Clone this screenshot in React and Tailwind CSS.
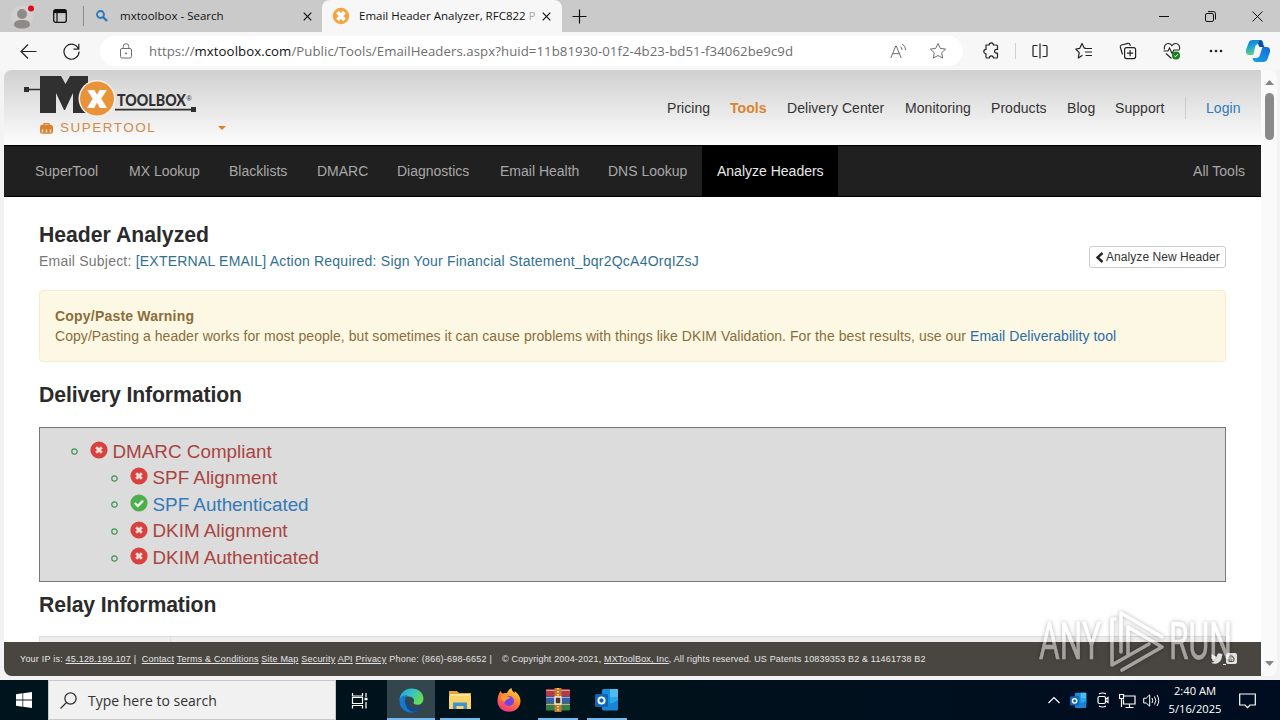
import React from 'react';
import clsx from 'clsx';

const topLinks = [
  { label: 'Pricing', width: 'w-[43px]' },
  { label: 'Tools', width: 'w-[37px]', active: true },
  { label: 'Delivery Center', width: 'w-[98px]' },
  { label: 'Monitoring', width: 'w-[66px]' },
  { label: 'Products', width: 'w-[56px]' },
  { label: 'Blog', width: 'w-[28px]' },
  { label: 'Support', width: 'w-[50px]' },
];

const toolTabs = [
  { label: 'SuperTool', width: 'w-[94px]' },
  { label: 'MX Lookup', width: 'w-[100px]' },
  { label: 'Blacklists', width: 'w-[88px]' },
  { label: 'DMARC', width: 'w-[80px]' },
  { label: 'Diagnostics', width: 'w-[103px]' },
  { label: 'Email Health', width: 'w-[108px]' },
  { label: 'DNS Lookup', width: 'w-[109px]' },
  { label: 'Analyze Headers', width: 'w-[136px]', active: true },
];

const checks = [
  { label: 'DMARC Compliant', ok: false, nested: false },
  { label: 'SPF Alignment', ok: false, nested: true },
  { label: 'SPF Authenticated', ok: true, nested: true },
  { label: 'DKIM Alignment', ok: false, nested: true },
  { label: 'DKIM Authenticated', ok: false, nested: true },
];

const Icon = ({ size = 16, box = 16, className, children }) => (
  <svg
    width={size}
    height={size}
    viewBox={`0 0 ${box} ${box}`}
    fill="none"
    stroke="currentColor"
    className={clsx('shrink-0', className)}
  >
    {children}
  </svg>
);

const CloseIcon = ({ size = 9 }) => (
  <Icon size={size} box={9}>
    <path d="M.7.7l7.6 7.6M8.3.7L.7 8.3" strokeWidth="1.2" />
  </Icon>
);

const TabStrip = () => (
  <div className="flex h-8 items-center bg-[#cacaca] text-[#111] font-['Open_Sans','Noto_Sans',sans-serif] text-[11.5px]">
    <svg width="24" height="24" viewBox="0 0 24 24" className="ml-[11px] mt-0.5 shrink-0">
      <circle cx="11" cy="11.5" r="11" fill="#d3d1cf" />
      <circle cx="11" cy="9" r="4.9" fill="#8d8a88" />
      <path d="M3 19.500c0-3.200 3.200-4.500 8-4.500s8 1.300 8 4.500c0 2.500-3.500 4-8 4s-8-1.500-8-4z" fill="#8d8a88" />
      <circle cx="20" cy="3.500" r="3" fill="#e00b1c" />
    </svg>
    <Icon size={14} box={14} className="ml-[18px]">
      <rect x=".7" y=".7" width="12.600" height="12.600" rx="2" strokeWidth="1.300" />
      <path d="M1 2.500h12" strokeWidth="3.200" />
      <path d="M4 4v9" strokeWidth="1.200" />
    </Icon>
    <div className="ml-[16px] h-5 w-px bg-[#8c8c8c]" />
    <svg width="12" height="12" viewBox="0 0 12 12" className="ml-[12px] shrink-0 text-[#2a76bd]">
      <circle cx="4.500" cy="4.500" r="3.500" fill="none" stroke="currentColor" strokeWidth="1.800" />
      <path d="M7 7l4 4" stroke="currentColor" strokeWidth="2.300" />
    </svg>
    <div className="ml-[12px] w-[183px] whitespace-nowrap">mxtoolbox - Search</div>
    <CloseIcon />
    <div className="ml-[10px] flex h-8 w-[240px] items-center rounded-t-lg bg-[#f7f7f7]">
      <svg width="18" height="18" viewBox="0 0 18 18" className="ml-[10px] shrink-0">
        <circle cx="9" cy="9" r="8.200" fill="#f6a33a" />
        <path d="M5.500 5l7 8M12.500 5l-7 8" stroke="#fff" strokeWidth="3.600" />
      </svg>
      <div className="ml-[9px] w-[178px] whitespace-nowrap">
        Email Header Analyzer, RFC822 <span className="text-[#aaa]">P</span>
      </div>
      <div className="ml-[5px] flex">
        <CloseIcon />
      </div>
    </div>
    <Icon size={15} box={15} className="ml-[10px]">
      <path d="M7.500 .5v14M.5 7.500h14" strokeWidth="1.200" />
    </Icon>
    <div className="ml-auto mr-[17px] flex items-center gap-[36px]">
      <Icon size={10} box={10}>
        <path d="M0 5.500h10" />
      </Icon>
      <Icon size={11} box={11}>
        <rect x=".5" y="2.500" width="8" height="8" rx="1.500" />
        <path d="M3 .6h5.500a2 2 0 0 1 2 2V8.500" />
      </Icon>
      <Icon size={11} box={11}>
        <path d="M.5.500l10 10M10.500.500l-10 10" />
      </Icon>
    </div>
  </div>
);

const AddressBar = () => (
  <div className="flex h-[38px] items-center bg-[#f7f7f7] text-[#222]">
    <Icon size={17} box={17} className="ml-[20px]">
      <path d="M16.500 8.500H1M8 1.500l-7 7 7 7" strokeWidth="1.200" />
    </Icon>
    <Icon size={17} box={17} className="ml-[26px]">
      <path d="M15.500 6A7.500 7.500 0 1 0 16 8.500M15.800 .8v5.400h-5.400" strokeWidth="1.200" />
    </Icon>
    <div className="ml-[20px] flex h-[30px] w-[863px] items-center rounded-full bg-white text-[#6e6e6e]">
      <Icon size={16} box={16} className="ml-[18px]">
        <rect x="2.500" y="5.500" width="11" height="9.500" rx="1.500" />
        <path d="M5.200 5.500V3.500a2.800 2.800 0 0 1 5.600 0v2" />
        <circle cx="8" cy="10.300" r=".6" fill="currentColor" />
      </Icon>
      <div className="ml-[15px] mt-px whitespace-nowrap font-['Open_Sans','Noto_Sans',sans-serif] text-[13.2px] tracking-[0.075px]">
        https://<span className="text-[#111]">mxtoolbox.com</span>
        /Public/Tools/EmailHeaders.aspx?huid=11b81930-01f2-4b23-bd51-f34062be9c9d
      </div>
      <Icon size={17} box={17} className="ml-auto">
        <path d="M.8 15L5.700 3h.6l4.900 12M2.600 10.700h6.800M10.200 3.500q1.800 1 1.900 3.500M12 1q3.500 1.700 3.700 6" />
      </Icon>
      <Icon size={18} box={18} className="ml-[22px] mr-[16px]">
        <path d="M9 1.500l2.300 4.900 5.300.7-3.900 3.700 1 5.300L9 13.500l-4.700 2.600 1-5.300L1.400 7.100l5.300-.7z" strokeLinejoin="round" />
      </Icon>
    </div>
    <Icon size={18} box={18} className="ml-[19px]">
      <path d="M4 3h3.200a2.100 2.100 0 0 1 4.200 0H14.500a1 1 0 0 1 1 1v3.400h-1a1.900 1.900 0 0 0 0 3.800h1V15a1 1 0 0 1-1 1h-3a2.100 2.100 0 0 0-4.200 0H5a1 1 0 0 1-1-1v-3.200a2.200 2.200 0 0 1 0-4.400z" strokeWidth="1.200" strokeLinejoin="round" />
    </Icon>
    <div className="ml-[15px] h-4 w-px bg-[#cfcfcf]" />
    <Icon size={16} box={16} className="ml-[16px]">
      <path d="M5.500 2.500H2a1 1 0 0 0-1 1v9a1 1 0 0 0 1 1h3.500M10.500 2.500H14a1 1 0 0 1 1 1v9a1 1 0 0 1-1 1h-3.500M8 .5v15" strokeWidth="1.200" />
    </Icon>
    <Icon size={18} box={18} className="ml-[27px]">
      <path d="M10.500 6.200H9.300L7 1.500 4.800 6.300.8 7l3.400 3.700-.9 5.300L7.500 13.300M10 6.500h7M10 10h7M10.500 13.500H17" strokeWidth="1.200" strokeLinejoin="round" />
    </Icon>
    <Icon size={18} box={18} className="ml-[26px]">
      <rect x="5.600" y="5.600" width="11" height="11" rx="2" strokeWidth="1.200" />
      <path d="M3.500 12.500L1.300 5a1.700 1.700 0 0 1 1.200-2L9 1.300a1.700 1.700 0 0 1 2 1.300l.3 1.200M11.100 8v6.200M8 11.100h6.200" strokeWidth="1.200" />
    </Icon>
    <svg width="18" height="18" viewBox="0 0 18 18" fill="none" stroke="#222" className="ml-[26px] shrink-0">
      <path d="M1.500 7.500C.5 4 3 1.500 5.300 1.500 7 1.500 8.300 2.500 9 3.700c.7-1.200 2-2.200 3.700-2.200C15 1.500 17.500 4 16.500 7.500M.5 9H5l1.500-3 2.600 5.500L10.800 8h5.700M3 11.500l5.500 5" strokeWidth="1.100" />
      <circle cx="13" cy="13.500" r="4" fill="#16801c" stroke="none" />
      <path d="M11.200 13.600l1.300 1.200 2.300-2.500" stroke="#fff" />
    </svg>
    <svg width="14" height="4" viewBox="0 0 14 4" fill="#222" className="ml-[28px] shrink-0">
      <circle cx="2" cy="2" r="1.300" />
      <circle cx="7" cy="2" r="1.300" />
      <circle cx="12" cy="2" r="1.300" />
    </svg>
    <svg width="26" height="24" viewBox="0 0 26 24" className="ml-[22px] shrink-0">
      <defs>
        <linearGradient id="copilotLeft" x1="0" y1="0" x2=".3" y2="1">
          <stop offset="0" stopColor="#1276c9" />
          <stop offset=".5" stopColor="#1da7d8" />
          <stop offset="1" stopColor="#5fd07e" />
        </linearGradient>
        <linearGradient id="copilotRight" x1="0" y1="1" x2="1" y2="0">
          <stop offset="0" stopColor="#17a6ee" />
          <stop offset="1" stopColor="#1467d6" />
        </linearGradient>
      </defs>
      <path d="M8 1h7c2.500 0 3 2 3.500 4h-5c-2 0-3 1.500-3.500 3.500L8.200 16H4.500C1 16 .5 13 1.200 10.500L3.500 4C4.200 2 5.500 1 8 1z" fill="url(#copilotLeft)" />
      <path d="M18 23h-7c-2.500 0-3-2-3.500-4h4c2 0 3-1.500 3.500-3.500L17.500 8h4C25 8 25.500 11 24.800 13.500L22.500 20C21.800 22 20.500 23 18 23z" fill="url(#copilotRight)" />
      <path d="M14.500 1c3 0 3.300 3 4 5l1 2h-5l-1.500-3z" fill="#0b4fa8" />
    </svg>
  </div>
);

const Logo = () => (
  <svg width="174" height="44" viewBox="0 0 174 44" className="block overflow-visible">
    <rect x="0" y="11" width="5" height="5" fill="#303030" />
    <path d="M4 13.500h13" stroke="#303030" strokeWidth="1.500" />
    <path d="M16 0h21l4.500 8L46 0h18v37H49V17l-8 17h-1L32 17v20H16z" fill="#303030" />
    <circle cx="73" cy="22.500" r="18.500" fill="#f3f1ee" />
    <circle cx="73" cy="22.500" r="17" fill="#e8923a" />
    <text x="73" y="31.500" textAnchor="middle" fill="#fff" className="font-['Open_Sans',sans-serif] text-[32px] font-extrabold">
      x
    </text>
    <text x="93" y="30" textLength="69" lengthAdjust="spacingAndGlyphs" fill="#303030" className="font-['Lato',sans-serif] text-[16px] font-black">
      TOOLBOX
    </text>
    <text x="162.500" y="25" fill="#303030" className="font-['Liberation_Sans',sans-serif] text-[7px]">
      ®
    </text>
    <path d="M91 33.700h78" stroke="#303030" strokeWidth="1.800" />
    <rect x="167" y="31" width="5" height="5" fill="#303030" />
  </svg>
);

const SiteHeader = () => (
  <div className="flex h-[75px] bg-gradient-to-b from-[#d0d0d0] to-[#fdfdfd] pl-[20px]">
    <div className="w-[643px] pt-[6px]">
      <Logo />
      <div className="ml-[16px] flex h-[16px] items-center text-[#d08a4a]">
        <svg width="13" height="11" viewBox="0 0 13 11" className="shrink-0">
          <path d="M4 2V.7h5V2" fill="none" stroke="#d9832e" strokeWidth="1.200" />
          <rect y="1.700" width="13" height="9" rx="2.500" fill="#d9832e" />
          <path d="M2.500 6.500v3M6.500 6.500v3M10.500 6.500v3" stroke="#f6e3cf" strokeWidth="1.400" />
        </svg>
        <span className="ml-[7px] w-[158px] text-[13.500px] tracking-[1.500px]">SUPERTOOL</span>
        <svg width="8" height="4" viewBox="0 0 8 4">
          <path d="M0 0h8L4 4z" fill="#d9832e" />
        </svg>
      </div>
    </div>
    <div className="flex h-[76px] items-center gap-5 text-[14px] tracking-[0.050px] text-[#333]">
      {topLinks.map((link) => (
        <a key={link.label} className={clsx('whitespace-nowrap', link.width, link.active && 'font-bold text-[#d9832e]')}>
          {link.label}
        </a>
      ))}
      <div className="h-[22px] w-px bg-[#ccc]" />
      <a className="text-[#337ab7]">Login</a>
    </div>
  </div>
);

const ToolBar = () => (
  <div className="flex h-[52px] items-center border-y border-black bg-[#202020] pl-4 pr-4 text-[14px] text-[#a8a8a8]">
    {toolTabs.map((tab) => (
      <a
        key={tab.label}
        className={clsx(
          'flex h-full items-center whitespace-nowrap pl-[15px]',
          tab.width,
          tab.active && 'bg-black text-[#e8e8e8]'
        )}
      >
        {tab.label}
      </a>
    ))}
    <a className="ml-auto">All Tools</a>
  </div>
);

const StatusIcon = ({ ok }) => (
  <svg width="18" height="18" viewBox="0 0 18 18" className="mb-[3px] shrink-0">
    <circle cx="9" cy="9" r="8.600" fill={ok ? '#4cae4c' : '#d9413c'} />
    {ok ? (
      <path d="M4.800 9l3 3 5.300-5.400" fill="none" stroke="#e8f5e8" strokeWidth="2.300" />
    ) : (
      <path d="M6.200 6.200l5.600 5.600M11.800 6.200l-5.600 5.600" stroke="#f3dcdb" strokeWidth="2.700" />
    )}
  </svg>
);

const CheckList = () => (
  <ul className="mt-[19px] h-[155px] border border-[#777] bg-[#dcdcdc] pt-[10px] text-[18.850px] text-[#a94442]">
    {checks.map((check) => (
      <li key={check.label} className={clsx('flex h-[26.600px] items-center', check.nested ? 'pl-[70.500px]' : 'pl-[30.500px]')}>
        <svg width="7" height="7" viewBox="0 0 7 7" className="mt-px shrink-0">
          <circle cx="3.500" cy="3.500" r="2.700" fill="none" stroke="#3c9450" strokeWidth="1.200" />
        </svg>
        <div className="ml-[12px] flex items-center">
          <StatusIcon ok={check.ok} />
          <span className={clsx('ml-[5px] mt-px whitespace-nowrap', check.ok && 'text-[#337ab7]')}>{check.label}</span>
        </div>
      </li>
    ))}
  </ul>
);

const Report = () => (
  <div className="h-[445px] overflow-hidden bg-white px-[35px] pt-[25px]">
    <div className="flex h-[52px] justify-between">
      <div>
        <h2 className="text-[21.200px] font-bold leading-[26px] text-[#2b2b2b]">Header Analyzed</h2>
        <p className="whitespace-nowrap text-[14px] leading-[27px] tracking-[0.222px] text-[#777]">
          Email Subject: <a className="text-[#31708f]">[EXTERNAL EMAIL] Action Required: Sign Your Financial Statement_bqr2QcA4OrqIZsJ</a>
        </p>
      </div>
      <button className="mt-[24px] flex h-[22px] w-[137px] items-center rounded-[3px] border border-[#ccc] bg-white pl-[5px] text-[12px] text-[#333]">
        <svg width="9" height="11" viewBox="0 0 9 11" className="mr-[2px] shrink-0">
          <path d="M7.500 1L2.500 5.500l5 4.500" fill="none" stroke="#222" strokeWidth="2.400" />
        </svg>
        <span className="whitespace-nowrap tracking-[0.060px]">Analyze New Header</span>
      </button>
    </div>
    <div className="mt-[16px] h-[72px] rounded border border-[#faebcc] bg-[#fcf8e3] px-[15px] pt-[15px] text-[14px] leading-5 text-[#8a6d3b]">
      <p className="font-bold tracking-[0.200px]">Copy/Paste Warning</p>
      <p className="whitespace-nowrap tracking-[0.060px]">
        Copy/Pasting a header works for most people, but sometimes it can cause problems with things like DKIM Validation. For the best results, use our{' '}
        <a className="text-[#2a6ca8]">Email Deliverability tool</a>
      </p>
    </div>
    <h2 className="mt-[20px] text-[21.200px] font-bold leading-[26px] tracking-[-0.100px] text-[#2b2b2b]">Delivery Information</h2>
    <CheckList />
    <h2 className="mt-[10px] text-[21.200px] font-bold leading-[26px] tracking-[-0.100px] text-[#2b2b2b]">Relay Information</h2>
    <div className="mt-[18px] flex h-[20px] border border-[#ddd] bg-[#eee]">
      <div className="w-[131px] border-r border-[#ddd]" />
    </div>
  </div>
);

const footerLinks = ['Contact', 'Terms & Conditions', 'Site Map', 'Security', 'API', 'Privacy'];

const Footer = () => (
  <div className="flex h-[34px] items-center whitespace-pre bg-[#494641] pl-[16px] pr-[23px] pt-px text-[9px] text-[#e4e4e4]">
    <div className="w-[482px] tracking-[0.210px]">
      Your IP is: <u>45.128.199.107</u> |{'  '}
      {footerLinks.map((link) => (
        <React.Fragment key={link}>
          <u>{link}</u>{' '}
        </React.Fragment>
      ))}
      Phone: (866)-698-6652 |
    </div>
    <div className="tracking-[0.165px]">
      © Copyright 2004-2021, <u>MXToolBox, Inc</u>, All rights reserved. US Patents 10839353 B2 & 11461738 B2
    </div>
    <svg width="27" height="12" viewBox="0 0 27 12" className="mb-0.5 ml-auto shrink-0">
      <path d="M0 9.500c2 0 3-.5 3.500-1C2 8.500 1 7.500 1 6.500h1C1 6 .3 5 .3 3.700l1 .3C.3 3 .3 1.500 1 .700c1.500 1.800 3 2.600 5 2.700C5.800 1.500 7 .3 8.400.3c.8 0 1.300.3 1.800.8l1.600-.6-1 1.400 1.300-.3-1.200 1.300c.1 4.700-3.500 7.800-7.200 7.800-1.400 0-2.700-.400-3.700-1.200z" fill="#e4e4e4" />
      <path d="M12 11.500h3" stroke="#e4e4e4" />
      <rect x="15" y="0" width="11" height="11" rx="2" fill="#e4e4e4" />
      <path d="M18 8.500V4.500a1.500 1.500 0 0 1 1.500-1.500h1a1.500 1.500 0 0 1 1.500 1.800h1V7a1.500 1.500 0 0 1-1.500 1.500zM19.500 5h1M19.500 7h2" fill="none" stroke="#494641" />
    </svg>
  </div>
);

const ScrollBar = () => (
  <div className="flex w-[16px] flex-col items-center rounded-r-lg bg-[#fafafa] py-[10px]">
    <svg width="9" height="5" viewBox="0 0 9 5">
      <path d="M0 5h9L4.500 0z" fill="#858585" />
    </svg>
    <div className="mt-[8px] h-[47px] w-[9px] rounded-full bg-[#8a8a8a]" />
    <svg width="9" height="5" viewBox="0 0 9 5" className="mt-auto">
      <path d="M0 0h9L4.500 5z" fill="#858585" />
    </svg>
  </div>
);

const Watermark = () => (
  <svg width="200" height="72" viewBox="0 0 200 72" className="absolute left-[1036px] top-[607px] overflow-visible opacity-50 drop-shadow-[0_0_2px_rgba(0,0,0,0.6)]">
    <g fill="#fff" stroke="#fff" strokeWidth=".6" className="font-['Roboto',sans-serif] text-[51px]">
      <text x="3" y="52" textLength="62" lengthAdjust="spacingAndGlyphs">ANY</text>
      <text x="133" y="52" textLength="63" lengthAdjust="spacingAndGlyphs">RUN</text>
    </g>
    <g fill="none" stroke="#fff" strokeWidth="3.600" strokeLinejoin="round" strokeLinecap="round">
      <path d="M79 12h-3v46l37-21" />
      <path d="M85 45V6l41 24" />
      <path d="M92 47V20l34 20-40 23" />
    </g>
  </svg>
);

const OutlookIcon = ({ size }) => (
  <svg width={size} height={size} viewBox="0 0 24 24" className="shrink-0">
    <rect x="7" y="1" width="16" height="16" rx="1.500" fill="#1490df" />
    <path d="M15 1h8v8h-8z" fill="#50b9ef" />
    <path d="M15 9h8v6h-8z" fill="#28a8ea" />
    <path d="M7 12l8 5 8-5v9a1.500 1.500 0 0 1-1.500 1.500h-13A1.500 1.500 0 0 1 7 21z" fill="#1b83d3" />
    <rect x="0" y="6" width="13" height="13" rx="1.500" fill="#0f65b8" />
    <circle cx="6.500" cy="12.500" r="3.100" fill="none" stroke="#fff" strokeWidth="1.900" />
  </svg>
);

const EdgeIcon = () => (
  <svg width="25" height="25" viewBox="0 0 24 24">
    <defs>
      <linearGradient id="edgeTop" x1="0" y1="0" x2="1" y2=".5">
        <stop offset="0" stopColor="#1da5dc" />
        <stop offset=".5" stopColor="#35c1c6" />
        <stop offset="1" stopColor="#66dc55" />
      </linearGradient>
    </defs>
    <path d="M.5 11.500C1 5 6 .5 12 .5c7 0 11.500 4.700 11.500 9.700 0 3.700-2.700 5.800-6 5.800-2.500 0-4-1-3.500-2 1-1.700.5-4.500-3-5.500C7 7 2 8 .5 11.500z" fill="url(#edgeTop)" />
    <path d="M.5 12C1 8 5 6.500 8.500 7c-3 2-3.500 6-2 9 2.200 4 8 6 13.500 4-2 2.500-4.800 3.500-8 3.500C5 23.500 0 18 .5 12z" fill="#1678cf" />
    <path d="M8.500 10.500c-1.500 5 3 9.500 8 9 2-.1 4-1 5-1.500.7-.3 1 .2.600.8-3.100 4.200-8.600 5-12.100 2.700-4-2.500-4.500-8.500-1.500-11z" fill="#114a8c" />
  </svg>
);

const ExplorerIcon = () => (
  <svg width="22" height="20" viewBox="0 0 22 20">
    <path d="M0 1h8l2 2h12v16H0z" fill="#eaa52f" />
    <path d="M1 4h20v4H1z" fill="#f8e5a5" />
    <path d="M0 6h22v13H0z" fill="#fbd467" />
    <path d="M4 19v-6.500h14V19h-3.500v-3h-7v3z" fill="#3e92d0" />
  </svg>
);

const FirefoxIcon = () => (
  <svg width="24" height="24" viewBox="0 0 24 24">
    <defs>
      <linearGradient id="foxBody" x1=".8" y1="0" x2=".3" y2="1">
        <stop offset="0" stopColor="#ffe042" />
        <stop offset=".5" stopColor="#ff7b2e" />
        <stop offset="1" stopColor="#f0318a" />
      </linearGradient>
    </defs>
    <path d="M2 6c.5-1.500 1-2.500 2-3 0 1 .5 2 1.500 2.500C7 4.500 9 5 10 5c1-2.500 2.500-4 4.500-5 .2 2.500 1.500 3.500 3.200 5 .1-.8 0-1.300-.200-2 4.500 3 6 7 6 10 0 6-5 10.800-11.500 10.800S.5 19 .5 13C.5 10 1 8 2 6z" fill="url(#foxBody)" />
    <circle cx="12" cy="13" r="5" fill="#7542e5" />
    <path d="M4 8c3-2 5 0 7 .5 2 .2 2.500 1 1 2-2 1.300-3.500 1-4 3.500C5 13 4 11 4 8z" fill="#ff9a33" />
  </svg>
);

const WinrarIcon = () => (
  <svg width="24" height="24" viewBox="0 0 24 24">
    <rect y="1" width="24" height="7" rx="1" fill="#b23a4c" />
    <rect y="8" width="24" height="7" fill="#3a5fa8" />
    <rect y="15" width="24" height="7.500" rx="1" fill="#348044" />
    <path d="M0 2.500h24M0 9.500h24M0 16.500h24" stroke="#e5b6a5" strokeWidth=".8" />
    <rect x="8.500" y="0" width="7" height="24" fill="#c17a35" />
    <path d="M12 0v24" stroke="#f5cf60" strokeWidth="2" strokeDasharray="1.500 1.500" />
    <rect x="9" y="9" width="6" height="7" fill="#4a3525" stroke="#fff" strokeWidth="1.300" />
  </svg>
);

const TaskButton = ({ active, open, wide, children }) => (
  <div className={clsx('flex h-10 flex-col items-center', wide ? 'w-[48px]' : 'w-[40px]', active && 'bg-[#34464d]')}>
    <div className="flex flex-1 items-center pt-0.5">{children}</div>
    <div className={clsx('h-[2px] w-full', (open || active) && 'bg-[#76b9ed]')} />
  </div>
);

const TaskBar = () => (
  <div className="flex h-10 items-center bg-gradient-to-r from-[#00141e] via-[#00121c] to-[#000c20] font-['Open_Sans','Noto_Sans',sans-serif] text-white">
    <div className="flex w-[48px] justify-center">
      <svg width="16" height="16" viewBox="0 0 16 16" fill="#fff">
        <path d="M0 2.200l6.500-.9v6.300H0zM7.200 1.200L16 0v7.600H7.200zM0 8.400h6.500v6.300L0 13.800zM7.200 8.400H16V16l-8.800-1.200z" />
      </svg>
    </div>
    <div className="flex h-10 w-[288px] items-center border border-[#c8c8c8] bg-[#f1f1f1] pl-[11px] text-[#333]">
      <Icon size={17} box={17}>
        <circle cx="10.500" cy="6.500" r="5.600" strokeWidth="1.300" />
        <path d="M6.500 10.500L.5 16.500" strokeWidth="1.300" />
      </Icon>
      <span className="ml-[11px] mt-px whitespace-nowrap text-[14px]">Type here to search</span>
    </div>
    <div className="flex w-[51px] justify-center">
      <Icon size={17} box={17} className="ml-[-4px]">
        <path d="M1.500 1v3h10V1M1.500 16.500v-3h10v3M1.500 5.500v6h10v-6zM15 1v4M15 10v6.500" strokeWidth="1.200" />
        <path d="M13.500 7h3" strokeWidth="2.500" />
      </Icon>
    </div>
    <div className="flex">
      <TaskButton active wide>
        <EdgeIcon />
      </TaskButton>
      <div className="ml-[5px] flex gap-[9px]">
        <TaskButton open>
          <ExplorerIcon />
        </TaskButton>
        <TaskButton>
          <FirefoxIcon />
        </TaskButton>
        <TaskButton open>
          <WinrarIcon />
        </TaskButton>
        <TaskButton open>
          <OutlookIcon size={24} />
        </TaskButton>
      </div>
    </div>
    <div className="ml-auto flex items-center">
      <Icon size={12} box={12}>
        <path d="M.5 9L6 3.500 11.500 9" strokeWidth="1.200" />
      </Icon>
      <div className="ml-[10px]">
        <OutlookIcon size={17} />
      </div>
      <Icon size={16} box={16} className="ml-[8px]">
        <rect x="3" y="4.500" width="7.500" height="7" rx="1.500" strokeWidth="1.200" />
        <path d="M10.500 7.500l2.500-2v5l-2.500-2M4 2q3.500-2 7 0M4 14q3.500 2 7 0" strokeWidth="1.100" />
      </Icon>
      <Icon size={17} box={17} className="ml-[8px]">
        <path d="M5 4h11v8H4.500V7.500M10.500 12v3M6.500 15.500h8M.5 2.500h4v4h-4zM2.500 6.500v8.500" strokeWidth="1.200" />
      </Icon>
      <Icon size={17} box={17} className="ml-[7px]">
        <path d="M.7 6.200h2.500l3.500-3.400v11.400L3.200 11H.7zM9 6q1.500 2.500 0 5M11.500 4.500q2.500 4 0 8M14 3q3.500 5.500 0 11" />
      </Icon>
      <div className="ml-[3px] w-[64px] whitespace-nowrap text-center text-[11.200px] leading-[18px]">
        <div>2:40 AM</div>
        <div>5/16/2025</div>
      </div>
      <Icon size={17} box={17} className="ml-[12px] mr-[24px]">
        <path d="M.7 2h15.600v11H11l-2.500 2.700L6 13H.7z" strokeWidth="1.200" />
      </Icon>
    </div>
  </div>
);

export default function App() {
  return (
    <div className="relative h-[720px] w-[1280px] overflow-hidden bg-[#f0f0f0]">
      <TabStrip />
      <AddressBar />
      <div className="flex h-[610px] bg-[#f3f3f3] pb-1 pl-1">
        <div className="w-[1257px] overflow-hidden rounded-l-lg font-['Liberation_Sans',Arial,sans-serif]">
          <SiteHeader />
          <ToolBar />
          <Report />
          <Footer />
        </div>
        <ScrollBar />
      </div>
      <TaskBar />
      <Watermark />
    </div>
  );
}
